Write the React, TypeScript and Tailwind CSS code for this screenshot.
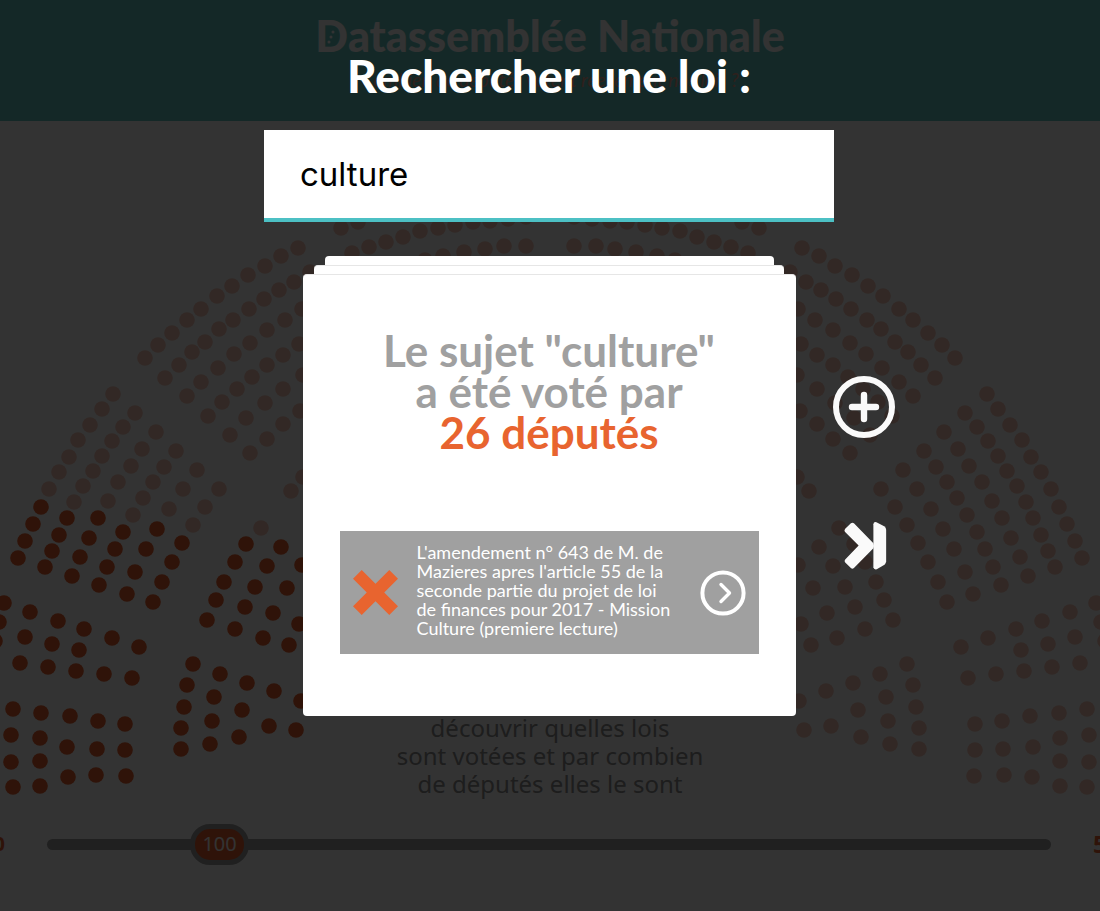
import React, { useState } from "react";

type Dot = [number, number];

const CHART_WIDTH = 1100;

// Seats of the left wing that only take the "voted" colour on the left side.
const VOTED: Dot[] = [
  [41, 507], [33, 524], [25, 541], [18, 558],
  [67, 518], [59, 535], [52, 551], [45, 567],
  [98, 518], [89, 538], [80, 557], [72, 576],
  [123, 532], [115, 549], [107, 567], [99, 585],
  [157, 529], [146, 549], [135, 572], [127, 594],
  [182, 543], [172, 562], [162, 582], [153, 602],
  [4, 603], [30, 612], [58, 621], [84, 629], [112, 638], [139, 647],
  [-1, 622], [25, 637], [52, 644], [79, 650], [-5, 641],
  [20, 663], [48, 667], [76, 671], [104, 674], [132, 678],
  [13, 709], [41, 713], [70, 716], [98, 721], [125, 724],
  [11, 735], [40, 738], [67, 747], [97, 749], [125, 750],
  [11, 762], [40, 761], [68, 777], [96, 775], [126, 776],
  [13, 787], [40, 786],
  [246, 544], [235, 562], [224, 582], [216, 600], [207, 620],
  [281, 547], [267, 566], [255, 587], [245, 607], [235, 629],
  [302, 565], [287, 588], [273, 613], [263, 638],
  [299, 624], [289, 645],
  [193, 664], [187, 685], [184, 707], [181, 728], [181, 749],
  [220, 674], [214, 697], [212, 721], [210, 744],
  [247, 683], [242, 710], [239, 737],
  [274, 691], [269, 726], [301, 701], [296, 730],
];

const OTHERS: Dot[] = [
  [298, 248], [281, 256], [265, 266], [248, 275], [232, 286], [217, 296],
  [201, 309], [187, 320], [172, 333], [158, 345], [145, 358],
  [310, 272], [294, 282], [279, 290], [264, 299], [249, 309], [233, 320],
  [219, 329], [205, 342], [192, 352], [179, 365], [165, 378],
  [302, 309], [285, 320], [267, 330], [250, 343], [234, 354], [218, 368],
  [201, 382], [187, 396],
  [299, 344], [283, 355], [267, 365], [252, 377], [237, 389], [222, 402], [208, 416],
  [303, 375], [283, 389], [265, 403], [246, 418], [230, 435],
  [300, 411], [283, 424], [267, 439], [250, 453],
  [113, 394], [102, 409], [90, 425], [78, 440], [69, 457], [59, 472], [49, 489],
  [135, 413], [123, 427], [112, 441], [102, 456], [93, 471], [83, 486], [74, 502],
  [156, 432], [142, 449], [131, 466], [118, 482], [108, 501],
  [176, 451], [164, 467], [153, 482], [143, 498], [133, 515],
  [197, 470], [183, 489], [169, 509],
  [219, 489], [205, 507], [193, 525],
  [303, 477], [291, 491], [261, 528],
  [341, 228], [358, 222],
  [352, 253], [369, 247], [386, 242], [403, 237], [420, 231], [438, 228],
  [455, 225], [473, 222], [490, 221], [508, 219], [526, 217],
  [425, 260], [443, 256], [464, 252], [485, 249], [504, 246], [526, 246],
];

function Hemicycle() {
  const mirror = ([x, y]: Dot): Dot => [CHART_WIDTH - x, y];
  const pale = [...OTHERS, ...OTHERS.map(mirror), ...VOTED.map(mirror)];
  return (
    <svg
      viewBox="0 121 1100 690"
      className="w-full [grid-area:1/1]"
      role="img"
      aria-label="Hémicycle"
    >
      <g className="fill-[#f8c8b9]">
        {pale.map(([x, y], i) => (
          <circle key={i} cx={x} cy={y} r={7.8} />
        ))}
      </g>
      <g className="fill-[#e8602d]">
        {VOTED.map(([x, y], i) => (
          <circle key={i} cx={x} cy={y} r={7.8} />
        ))}
      </g>
    </svg>
  );
}

function VoteSlider() {
  return (
    <footer className="-mx-10 mt-3 flex items-center text-[#e8602d]">
      <span className="w-[45px] shrink-0 text-right text-xl font-bold">0</span>
      <div className="relative mx-[42px] flex flex-1">
        <input
          id="votes"
          type="range"
          min={15}
          max={577}
          defaultValue={100}
          aria-label="Nombre de députés"
          className="h-[42px] w-full appearance-none bg-transparent [&::-webkit-slider-runnable-track]:h-[11px] [&::-webkit-slider-runnable-track]:rounded-full [&::-webkit-slider-runnable-track]:bg-[#a0a0a0] [&::-webkit-slider-thumb]:-mt-[15px] [&::-webkit-slider-thumb]:h-[41px] [&::-webkit-slider-thumb]:w-[59px] [&::-webkit-slider-thumb]:appearance-none [&::-webkit-slider-thumb]:rounded-[20px] [&::-webkit-slider-thumb]:border-5 [&::-webkit-slider-thumb]:border-solid [&::-webkit-slider-thumb]:border-[#a0a0a0] [&::-webkit-slider-thumb]:bg-[#e8602d]"
        />
        <output
          htmlFor="votes"
          className="pointer-events-none absolute inset-y-0 left-[15%] flex w-[44px] items-center justify-center text-xl text-white"
        >
          100
        </output>
      </div>
      <span className="w-[47px] shrink-0 text-2xl font-bold">577</span>
    </footer>
  );
}

function Page() {
  return (
    <div>
      <header className="flex h-[121px] flex-col items-center bg-[#64c8c3] pt-2 text-white">
        <p className="font-[Lato] text-[43px] leading-[56px] font-black">
          <span className="relative">
            D
            <svg viewBox="0 0 12 18" className="absolute top-[18px] left-[11px] h-[18px] w-3 fill-white">
              <circle cx="7" cy="4" r="1.5" />
              <circle cx="5" cy="9" r="1.5" />
              <circle cx="3" cy="14" r="1.5" />
            </svg>
          </span>
          atassemblée Nationale
        </p>
        <p className="font-[Lato] text-[19px] leading-8 text-[#e8a08a] italic">
          Combien de députés votent réellement nos lois ?
        </p>
      </header>
      <main className="grid">
        <Hemicycle />
        <p className="mb-[13px] self-end text-center text-2xl leading-7 text-[#909090] [grid-area:1/1]">
          découvrir quelles lois
          <br />
          sont votées et par combien
          <br />
          de députés elles le sont
        </p>
      </main>
      <VoteSlider />
    </div>
  );
}

function CrossIcon() {
  return (
    <svg viewBox="70 149 134 134" className="size-[45px] shrink-0 fill-[#e8642f]" aria-hidden="true">
      <path d="M96 149 137 190 178 149 204 175 163 216 204 257 178 283 137 242 96 283 70 257 111 216 70 175Z" />
    </svg>
  );
}

function NextIcon() {
  return (
    <svg viewBox="0 0 46 46" fill="none" stroke="currentColor" className="size-[46px]" aria-hidden="true">
      <circle cx="23" cy="23" r="20.6" strokeWidth="4" />
      <path d="M21 14.5 29.5 23 21 31.5" strokeWidth="3.4" strokeLinecap="round" strokeLinejoin="round" />
    </svg>
  );
}

function PlusIcon() {
  return (
    <svg viewBox="0 0 62 62" fill="none" stroke="currentColor" strokeWidth="6" className="size-[62px]" aria-hidden="true">
      <circle cx="31" cy="31" r="28" />
      <path d="M31 19V43M19 31H43" strokeLinecap="round" strokeWidth="6.4" />
    </svg>
  );
}

function SkipIcon() {
  return (
    <svg viewBox="66 482 136 146" className="h-[49px] w-[46px] fill-current" aria-hidden="true">
      <path d="M77 514Q74 509 78 505L95 489Q99 486 104 489L162 548Q165 555 162 563L104 622Q99 626 95 622L78 606Q74 601 78 597L118 555Z" />
      <path d="M162 492Q163 483 171 486L194 498Q200 502 200 508V602Q200 608 195 612L172 626Q163 628 162 620Z" />
    </svg>
  );
}

function ResultCard({ query }: { query: string }) {
  return (
    <section className="flex flex-col items-center">
      <div className="h-[9px] w-[449px] rounded-t bg-white" />
      <div className="h-[9px] w-[470px] rounded-t border-t border-[#e6e6e6] bg-white" />
      <div className="w-full rounded border-t border-[#e6e6e6] bg-white px-[37px] pt-[55px] pb-[62px]">
        <h2 className="text-center font-[Lato] text-[44px] leading-[41px] font-bold text-[#a0a0a0]">
          Le sujet "{query}"
          <br />
          a été voté par
          <br />
          <strong className="font-bold text-[#e8642f]">26 députés</strong>
        </h2>
        <article className="mt-[78px] flex h-[123px] items-center bg-[#a0a0a0] px-[13px] text-white">
          <CrossIcon />
          <p className="ml-[19px] flex-1 pb-1 font-[Lato] text-lg leading-[19px] whitespace-nowrap">
            L'amendement n° 643 de M. de
            <br />
            Mazieres apres l'article 55 de la
            <br />
            seconde partie du projet de loi
            <br />
            de finances pour 2017 - Mission
            <br />
            Culture (premiere lecture)
          </p>
          <button type="button" aria-label="Voir la loi">
            <NextIcon />
          </button>
        </article>
      </div>
    </section>
  );
}

function SearchOverlay() {
  const [query, setQuery] = useState("culture");
  return (
    <div className="absolute inset-0 flex flex-col items-center bg-black/80 pt-12 pr-0.5">
      <label htmlFor="law" className="font-[Lato] text-[46px] leading-[56px] font-black text-white">
        Rechercher une loi :
      </label>
      <input
        id="law"
        type="text"
        value={query}
        onChange={(e) => setQuery(e.target.value)}
        className="mt-[26px] h-[92px] w-[570px] max-w-full border-b-4 border-[#4cc0c4] bg-white px-9 font-[Inter] text-[33px] text-black outline-none"
      />
      <div className="mt-[34px] grid w-full grid-cols-[1fr_493px_1fr]">
        <div />
        <ResultCard query={query} />
        <div className="flex flex-col items-start pt-[120px] pl-[37px] text-[#fafafa]">
          <div className="flex flex-col items-center gap-[83px]">
            <button type="button" aria-label="Ajouter">
              <PlusIcon />
            </button>
            <button type="button" aria-label="Passer">
              <SkipIcon />
            </button>
          </div>
        </div>
      </div>
    </div>
  );
}

export default function App() {
  return (
    <div className="relative min-h-screen overflow-hidden bg-white font-['Noto_Sans',sans-serif]">
      <Page />
      <SearchOverlay />
    </div>
  );
}
